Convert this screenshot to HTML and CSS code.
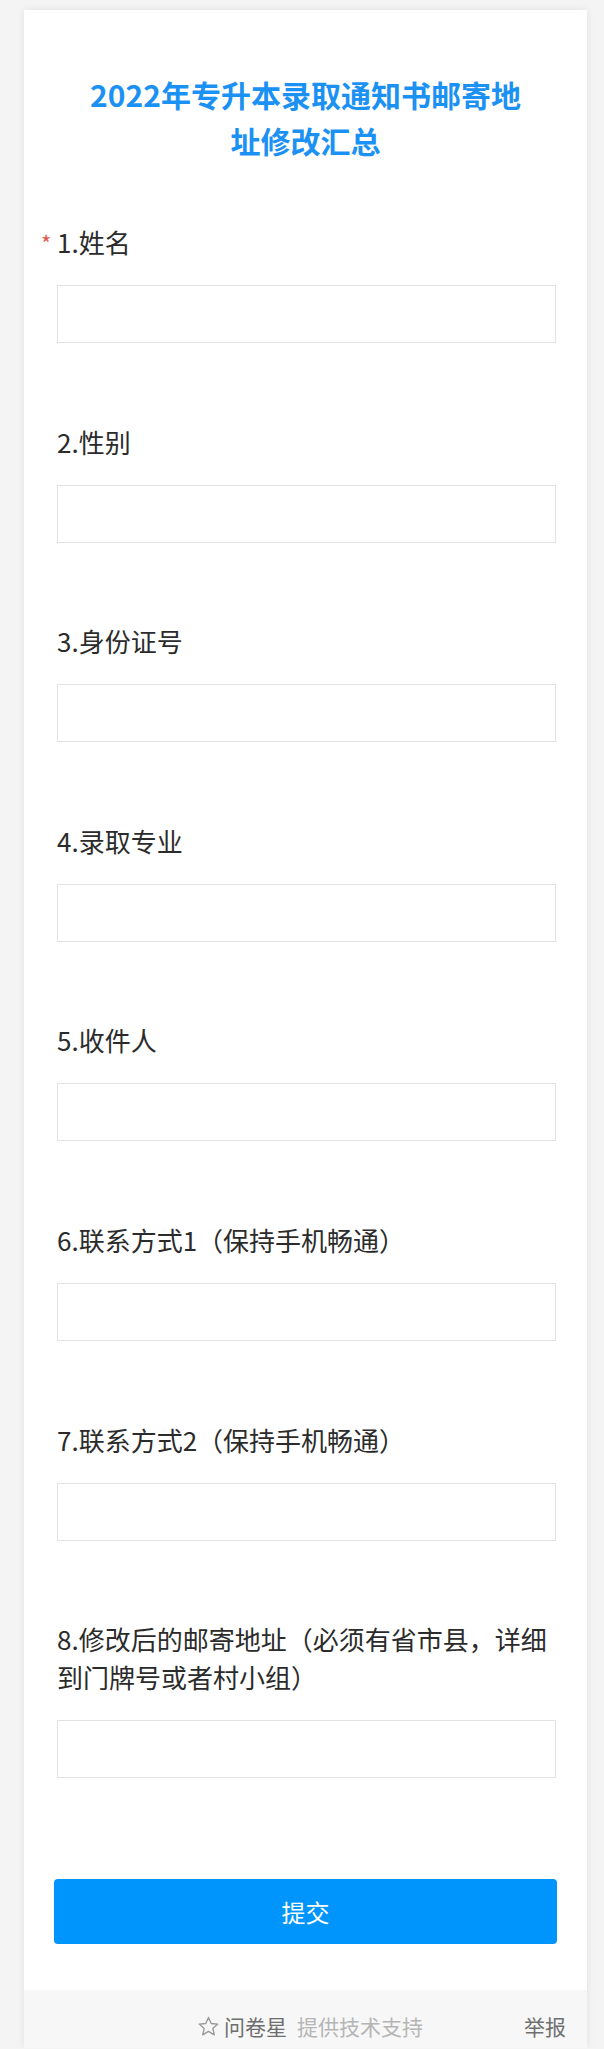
FILE: index.html
```html
<!DOCTYPE html>
<html lang="zh-CN">
<head>
    <meta charset="UTF-8">
    <meta name="viewport" content="width=device-width, initial-scale=1.0">
    <title>2022年专升本录取通知书邮寄地址修改汇总</title>
    <link rel="stylesheet" href="styles.css">
</head>
<body>
    <div class="survey">
        <h1 class="survey-title">2022年专升本录取通知书邮寄地址修改汇总</h1>

        <form class="survey-form">
            <div class="question">
                <div class="question-label"><span class="required">*</span>1.姓名</div>
                <input type="text" class="question-input">
            </div>
            <div class="question">
                <div class="question-label">2.性别</div>
                <input type="text" class="question-input">
            </div>
            <div class="question">
                <div class="question-label">3.身份证号</div>
                <input type="text" class="question-input">
            </div>
            <div class="question">
                <div class="question-label">4.录取专业</div>
                <input type="text" class="question-input">
            </div>
            <div class="question">
                <div class="question-label">5.收件人</div>
                <input type="text" class="question-input">
            </div>
            <div class="question">
                <div class="question-label">6.联系方式1（保持手机畅通）</div>
                <input type="text" class="question-input">
            </div>
            <div class="question">
                <div class="question-label">7.联系方式2（保持手机畅通）</div>
                <input type="text" class="question-input">
            </div>
            <div class="question">
                <div class="question-label">8.修改后的邮寄地址（必须有省市县，详细到门牌号或者村小组）</div>
                <input type="text" class="question-input">
            </div>

            <button type="button" class="submit-button">提交</button>
        </form>

        <div class="survey-footer">
            <div class="footer-brand">
                <svg class="star-icon" viewBox="0 0 20 20" width="21" height="21">
                    <path d="M10 1.4 L12.6 7.1 L18.8 7.7 L14.1 11.8 L15.5 17.9 L10 14.7 L4.5 17.9 L5.9 11.8 L1.2 7.7 L7.4 7.1 Z" fill="none" stroke="#999" stroke-width="1.3" stroke-linejoin="round"/>
                </svg>
                <span class="brand-name">问卷星</span>
                <span class="brand-note">提供技术支持</span>
            </div>
            <a class="report-link">举报</a>
        </div>
    </div>
</body>
</html>
```

FILE: styles.css
```css
/* 页面背景 */
html, body {
    margin: 0;
    padding: 0;
}

body {
    background: #f4f4f4;
    font-family: "Noto Sans CJK SC", "Liberation Sans", sans-serif;
    color: #333;
    overflow: hidden;
}

/* 问卷卡片 */
.survey {
    width: 563px;
    margin: 10px 0 0 24px;
    background: #fff;
    box-shadow: 0 0 8px rgba(0, 0, 0, 0.08);
}

/* 标题 */
.survey-title {
    margin: 0;
    padding: 61px 61px 0;
    font-size: 30px;
    line-height: 46px;
    font-weight: bold;
    color: #1c91f4;
    text-align: center;
}

.survey-form {
    padding: 60px 31px 0 33px;
}

/* 题目 */
.question {
    margin-bottom: 79.6px;
}

.question:last-of-type {
    margin-bottom: 0;
}

.question-label {
    font-size: 26px;
    line-height: 38px;
    color: #2b2b2b;
}

.required {
    display: inline-block;
    width: 16px;
    margin-left: -16px;
    color: #e4574f;
    font-size: 22px;
    line-height: 38px;
    vertical-align: top;
}

.question-input {
    display: block;
    box-sizing: border-box;
    width: 100%;
    height: 58px;
    margin-top: 24px;
    border: 1px solid #e2e2e2;
    border-radius: 0;
    background: #fff;
    outline: none;
}

/* 提交按钮 */
.submit-button {
    display: block;
    width: 503px;
    height: 65px;
    margin: 101px 0 46px -3px;
    border: none;
    border-radius: 4px;
    background: #0095fd;
    color: #fff;
    font-family: inherit;
    font-size: 24px;
    cursor: pointer;
}

/* 底部 */
.survey-footer {
    display: grid;
    grid-template-columns: 1fr auto 1fr;
    align-items: center;
    height: 58px;
    box-sizing: border-box;
    padding: 22px 21px 8px;
    background: #f7f7f7;
    font-size: 21px;
    line-height: 28px;
}

.footer-brand {
    grid-column: 2;
    display: flex;
    align-items: center;
    margin-left: 10px;
}

.star-icon {
    margin-right: 5px;
}

.brand-name {
    color: #6e6e6e;
    margin-right: 10px;
}

.brand-note {
    color: #b5b5b5;
}

.report-link {
    grid-column: 3;
    justify-self: end;
    color: #707070;
}
```
